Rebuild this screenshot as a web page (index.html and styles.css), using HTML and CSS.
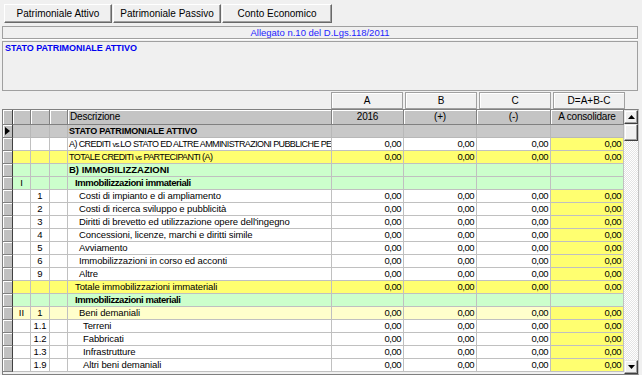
FILE: index.html
```html
<!DOCTYPE html>
<html>
<head>
<meta charset="utf-8">
<link rel="stylesheet" href="styles.css">
</head>
<body>
<div class="win">
  <div class="tabs">
    <button class="btn b1">Patrimoniale Attivo</button>
    <button class="btn b2">Patrimoniale Passivo</button>
    <button class="btn b3">Conto Economico</button>
  </div>
  <div class="caption">Allegato n.10 del D.Lgs.118/2011</div>
  <div class="memo">STATO PATRIMONIALE ATTIVO</div>
  <div class="colheads">
    <div class="ch">A</div>
    <div class="ch">B</div>
    <div class="ch">C</div>
    <div class="ch">D=A+B-C</div>
  </div>
  <div class="gridbox">
    <div class="grid">
      <div class="row head">
        <div class="cell ind"></div><div class="cell"></div><div class="cell"></div><div class="cell"></div>
        <div class="cell desc">Descrizione</div>
        <div class="cell hc">2016</div><div class="cell hc">(+)</div><div class="cell hc">(-)</div><div class="cell hc">A consolidare</div>
      </div>
      <div class="row grey">
        <div class="cell ind"><svg class="cur" width="5" height="8" viewBox="0 0 5 8"><path d="M0 0L5 4L0 8Z" fill="#000"/></svg></div><div class="cell"></div><div class="cell"></div><div class="cell"></div>
        <div class="cell desc l1 stato">STATO PATRIMONIALE ATTIVO</div>
        <div class="cell"></div><div class="cell"></div><div class="cell"></div><div class="cell"></div>
      </div>
      <div class="row white">
        <div class="cell ind"></div><div class="cell"></div><div class="cell"></div><div class="cell"></div>
        <div class="cell desc l1 caps">A) CREDITI <span class="sm">vs.</span>LO STATO ED ALTRE AMMINISTRAZIONI PUBBLICHE PE</div>
        <div class="cell num">0,00</div><div class="cell num">0,00</div><div class="cell num">0,00</div><div class="cell num d">0,00</div>
      </div>
      <div class="row total">
        <div class="cell ind"></div><div class="cell"></div><div class="cell"></div><div class="cell"></div>
        <div class="cell desc l1 caps">TOTALE CREDITI <span class="sm">vs</span> PARTECIPANTI (A)</div>
        <div class="cell num">0,00</div><div class="cell num">0,00</div><div class="cell num">0,00</div><div class="cell num d">0,00</div>
      </div>
      <div class="row green">
        <div class="cell ind"></div><div class="cell"></div><div class="cell"></div><div class="cell"></div>
        <div class="cell desc l1 bold">B) IMMOBILIZZAZIONI</div>
        <div class="cell"></div><div class="cell"></div><div class="cell"></div><div class="cell"></div>
      </div>
      <div class="row green">
        <div class="cell ind"></div><div class="cell ctr">I</div><div class="cell"></div><div class="cell"></div>
        <div class="cell desc l2 bold lc">Immobilizzazioni immateriali</div>
        <div class="cell"></div><div class="cell"></div><div class="cell"></div><div class="cell"></div>
      </div>
      <div class="row white">
        <div class="cell ind"></div><div class="cell"></div><div class="cell ctr">1</div><div class="cell"></div>
        <div class="cell desc l3">Costi di impianto e di ampliamento</div>
        <div class="cell num">0,00</div><div class="cell num">0,00</div><div class="cell num">0,00</div><div class="cell num d">0,00</div>
      </div>
      <div class="row white">
        <div class="cell ind"></div><div class="cell"></div><div class="cell ctr">2</div><div class="cell"></div>
        <div class="cell desc l3">Costi di ricerca sviluppo e pubblicità</div>
        <div class="cell num">0,00</div><div class="cell num">0,00</div><div class="cell num">0,00</div><div class="cell num d">0,00</div>
      </div>
      <div class="row white">
        <div class="cell ind"></div><div class="cell"></div><div class="cell ctr">3</div><div class="cell"></div>
        <div class="cell desc l3">Diritti di brevetto ed utilizzazione opere dell'ingegno</div>
        <div class="cell num">0,00</div><div class="cell num">0,00</div><div class="cell num">0,00</div><div class="cell num d">0,00</div>
      </div>
      <div class="row white">
        <div class="cell ind"></div><div class="cell"></div><div class="cell ctr">4</div><div class="cell"></div>
        <div class="cell desc l3">Concessioni, licenze, marchi e diritti simile</div>
        <div class="cell num">0,00</div><div class="cell num">0,00</div><div class="cell num">0,00</div><div class="cell num d">0,00</div>
      </div>
      <div class="row white">
        <div class="cell ind"></div><div class="cell"></div><div class="cell ctr">5</div><div class="cell"></div>
        <div class="cell desc l3">Avviamento</div>
        <div class="cell num">0,00</div><div class="cell num">0,00</div><div class="cell num">0,00</div><div class="cell num d">0,00</div>
      </div>
      <div class="row white">
        <div class="cell ind"></div><div class="cell"></div><div class="cell ctr">6</div><div class="cell"></div>
        <div class="cell desc l3">Immobilizzazioni in corso ed acconti</div>
        <div class="cell num">0,00</div><div class="cell num">0,00</div><div class="cell num">0,00</div><div class="cell num d">0,00</div>
      </div>
      <div class="row white">
        <div class="cell ind"></div><div class="cell"></div><div class="cell ctr">9</div><div class="cell"></div>
        <div class="cell desc l3">Altre</div>
        <div class="cell num">0,00</div><div class="cell num">0,00</div><div class="cell num">0,00</div><div class="cell num d">0,00</div>
      </div>
      <div class="row total">
        <div class="cell ind"></div><div class="cell"></div><div class="cell"></div><div class="cell"></div>
        <div class="cell desc l2">Totale immobilizzazioni immateriali</div>
        <div class="cell num">0,00</div><div class="cell num">0,00</div><div class="cell num">0,00</div><div class="cell num d">0,00</div>
      </div>
      <div class="row green">
        <div class="cell ind"></div><div class="cell"></div><div class="cell"></div><div class="cell"></div>
        <div class="cell desc l2 bold lc">Immobilizzazioni materiali</div>
        <div class="cell"></div><div class="cell"></div><div class="cell"></div><div class="cell"></div>
      </div>
      <div class="row light">
        <div class="cell ind"></div><div class="cell ctr">II</div><div class="cell ctr">1</div><div class="cell"></div>
        <div class="cell desc l3">Beni demaniali</div>
        <div class="cell num">0,00</div><div class="cell num">0,00</div><div class="cell num">0,00</div><div class="cell num d">0,00</div>
      </div>
      <div class="row white">
        <div class="cell ind"></div><div class="cell"></div><div class="cell ctr">1.1</div><div class="cell"></div>
        <div class="cell desc l4">Terreni</div>
        <div class="cell num">0,00</div><div class="cell num">0,00</div><div class="cell num">0,00</div><div class="cell num d">0,00</div>
      </div>
      <div class="row white">
        <div class="cell ind"></div><div class="cell"></div><div class="cell ctr">1.2</div><div class="cell"></div>
        <div class="cell desc l4">Fabbricati</div>
        <div class="cell num">0,00</div><div class="cell num">0,00</div><div class="cell num">0,00</div><div class="cell num d">0,00</div>
      </div>
      <div class="row white">
        <div class="cell ind"></div><div class="cell"></div><div class="cell ctr">1.3</div><div class="cell"></div>
        <div class="cell desc l4">Infrastrutture</div>
        <div class="cell num">0,00</div><div class="cell num">0,00</div><div class="cell num">0,00</div><div class="cell num d">0,00</div>
      </div>
      <div class="row white">
        <div class="cell ind"></div><div class="cell"></div><div class="cell ctr">1.9</div><div class="cell"></div>
        <div class="cell desc l4">Altri beni demaniali</div>
        <div class="cell num">0,00</div><div class="cell num">0,00</div><div class="cell num">0,00</div><div class="cell num d">0,00</div>
      </div>
    </div>
    <div class="vscroll">
      <div class="sbtn"><svg width="7" height="4" viewBox="0 0 7 4"><path d="M3.5 0L7 4H0Z" fill="#000"/></svg></div>
      <div class="thumb"></div>
      <div class="track"></div>
      <div class="sbtn"><svg width="7" height="4" viewBox="0 0 7 4"><path d="M0 0H7L3.5 4Z" fill="#000"/></svg></div>
    </div>
  </div>
</div>
</body>
</html>
```

FILE: styles.css
```css
html, body {
  margin: 0;
  padding: 0;
}
body {
  background: #f0f0f0;
  font-family: "Liberation Sans", Arial, sans-serif;
  width: 642px;
  height: 375px;
  overflow: hidden;
  color: #000;
}
.win {
  padding: 4px 0 0 2px;
  width: 637px;
}
.tabs {
  display: flex;
  gap: 1px;
  margin-left: 2px;
  height: 19px;
}
.btn {
  box-sizing: border-box;
  height: 19px;
  width: 108px;
  padding: 0;
  margin: 0;
  font: 10px "Liberation Sans", Arial, sans-serif;
  color: #000;
  background: #f0f0f0;
  border: 1px solid;
  border-color: #fff #696969 #696969 #fff;
  box-shadow: inset -1px -1px #a0a0a0;
}
.b3 { width: 110px; }
.caption {
  box-sizing: border-box;
  margin-top: 3px;
  width: 636px;
  height: 13px;
  border: 1px solid #a0a0a0;
  box-shadow: 0 1px #fff;
  color: #2424ff;
  font-size: 9.5px;
  line-height: 11px;
  text-align: center;
}
.memo {
  box-sizing: border-box;
  margin-top: 2px;
  width: 636px;
  height: 50px;
  border: 1px solid #a0a0a0;
  padding: 1px 2px;
  color: #0000f0;
  font-weight: bold;
  font-size: 9px;
  letter-spacing: -0.05px;
  line-height: 11px;
}
.colheads {
  display: flex;
  gap: 2px;
  margin-top: 1px;
  padding-left: 329px;
  height: 17px;
}
.ch {
  box-sizing: border-box;
  width: 72px;
  height: 17px;
  border: 1px solid #a0a0a0;
  box-shadow: inset 1px 1px #fff;
  font-size: 10px;
  line-height: 15px;
  text-align: center;
}
.gridbox {
  box-sizing: border-box;
  display: flex;
  width: 637px;
  height: 266px;
  border: 1px solid #808080;
  border-right-color: #c0c0c0;
  background: #f0f0f0;
}
.grid {
  flex: 1;
  overflow: hidden;
}
.row {
  display: grid;
  grid-template-columns: 10px 18px 19px 18px 264px 72px 73px 74px 73px;
  height: 13px;
  font-family: "Liberation Sans Narrow", "Liberation Sans", Arial, sans-serif;
  font-size: 9.5px;
}
.cell {
  box-sizing: border-box;
  border-right: 1px solid #c0c0c0;
  border-bottom: 1px solid #c0c0c0;
  overflow: hidden;
  white-space: nowrap;
  text-overflow: clip;
  line-height: 12px;
}
.desc { letter-spacing: -0.1px; }
.ind {
  background: #c0c0c0;
  border-right: 1px solid #404040;
  border-bottom: 1px solid #808080;
  box-shadow: inset 1px 1px #fff;
  display: flex;
  align-items: center;
  padding-left: 2px;
}
.row.head {
  height: 15px;
  font-family: "Liberation Sans", Arial, sans-serif;
  font-size: 10px;
}
.head .cell {
  background: #c4c4c4;
  border-right: 1px solid #808080;
  border-bottom: 1px solid #808080;
  box-shadow: inset 1px 1px #fff;
  line-height: 14px;
  letter-spacing: -0.2px;
}
.head .desc { padding-left: 2px; }
.hc { text-align: center; }
.grey .cell { background: #c8c8c8; border-color: #b8b8b8; }
.white .cell { background: #fff; }
.total .cell { background: #ffff70; }
.green .cell { background: #ccffcc; }
.light .cell { background: #ffffcc; }
.row .cell.ind { background: #c0c0c0; border-right-color: #404040; border-bottom-color: #808080; }
.row .cell.d { background: #ffff70; }
.green .cell.d, .grey .cell.d { background: inherit; }
.num {
  text-align: right;
  padding-right: 2px;
  letter-spacing: -0.5px;
}
.ctr { text-align: center; }
.l1 { padding-left: 1px; }
.l2 { padding-left: 7px; }
.l3 { padding-left: 11px; }
.l4 { padding-left: 15px; }
.bold { font-weight: bold; letter-spacing: 0; }
.bold.lc { letter-spacing: -0.45px; }
.caps { font-size: 9px; letter-spacing: -0.6px; }
.stato {
  font-family: "Liberation Sans", Arial, sans-serif;
  font-weight: bold;
  font-size: 9px;
  letter-spacing: -0.2px;
}
.sm { font-size: 7.5px; }
.vscroll {
  width: 14px;
  display: flex;
  flex-direction: column;
}
.sbtn, .thumb {
  box-sizing: border-box;
  height: 14px;
  background: #f0f0f0;
  border: 1px solid;
  border-color: #e8e8e8 #404040 #404040 #e8e8e8;
  box-shadow: inset -1px -1px #a0a0a0, inset 1px 1px #fff;
  display: flex;
  align-items: center;
  justify-content: center;
}
.thumb { height: 17px; }
.track {
  flex: 1;
  background: repeating-conic-gradient(#ffffff 0 25%, #e4e4e4 0 50%) 0 0 / 2px 2px;
}
```
